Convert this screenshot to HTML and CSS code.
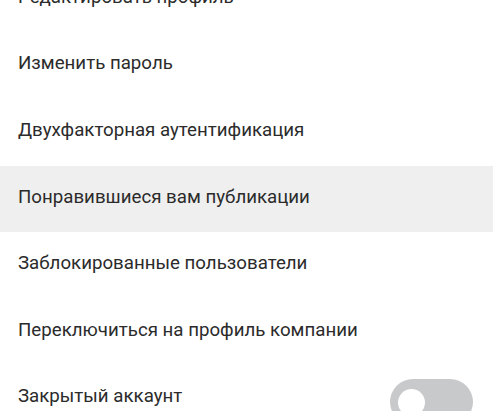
FILE: index.html
```html
<!DOCTYPE html>
<html lang="ru">
<head>
<meta charset="utf-8">
<link rel="stylesheet" href="styles.css">
</head>
<body>
<ul class="menu">
  <li class="item">Редактировать профиль</li>
  <li class="item">Изменить пароль</li>
  <li class="item">Двухфакторная аутентификация</li>
  <li class="item active">Понравившиеся вам публикации</li>
  <li class="item">Заблокированные пользователи</li>
  <li class="item">Переключиться на профиль компании</li>
  <li class="item">Закрытый аккаунт<span class="switch"><span class="thumb"></span></span></li>
</ul>
</body>
</html>
```

FILE: styles.css
```css
html, body {
  margin: 0;
  padding: 0;
  background: #ffffff;
  overflow: hidden;
}
.menu {
  list-style: none;
  margin: -34px 0 0 0;
  padding: 0;
  font-family: Roboto, "Noto Sans", sans-serif;
  font-size: 18.7px;
  color: #2b2b2b;
}
.item {
  height: 66.6px;
  box-sizing: border-box;
  padding: 0 20px 5px 18px;
  display: flex;
  align-items: center;
  justify-content: space-between;
}
.active {
  background: #efefef;
}
.switch {
  width: 83px;
  height: 46px;
  border-radius: 23px;
  background: #c8c9cb;
  display: flex;
  align-items: center;
  padding-left: 8px;
  box-sizing: border-box;
  margin-top: 12px;
}
.thumb {
  width: 27px;
  height: 27px;
  border-radius: 50%;
  background: #ffffff;
}
```
